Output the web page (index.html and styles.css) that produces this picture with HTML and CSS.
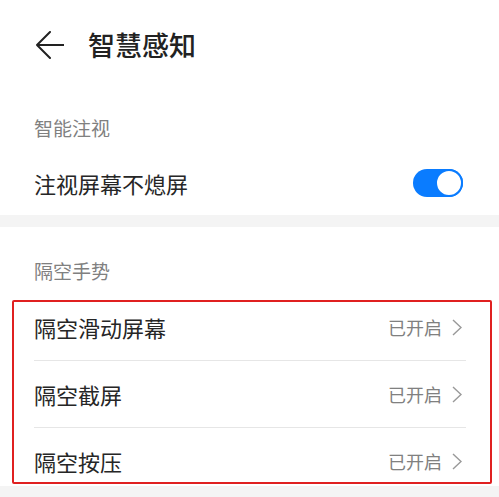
FILE: index.html
```html
<!DOCTYPE html>
<html>

<head>
    <meta charset="utf-8">
    <title>智慧感知</title>
    <link rel="stylesheet" href="styles.css">
</head>

<body>
    <div class="header">
        <svg class="back" width="28" height="28" viewBox="0 0 28 28">
            <path d="M14 1 L1 14 L14 27 M1 14 L28 14" fill="none" stroke="#222" stroke-width="2" stroke-linecap="round" stroke-linejoin="round"/>
        </svg>
        <h1>智慧感知</h1>
    </div>

    <div class="card first">
        <div class="sub-title">智能注视</div>
        <div class="row switch-row">
            <span class="row-label">注视屏幕不熄屏</span>
            <span class="toggle"><span class="knob"></span></span>
        </div>
    </div>

    <div class="card second">
        <div class="sub-title">隔空手势</div>
        <div class="list">
            <div class="row item">
                <span class="row-label">隔空滑动屏幕</span>
                <span class="row-value">已开启<svg class="chevron" width="10" height="17" viewBox="0 0 10 17"><path d="M1 1 L9 8.5 L1 16" fill="none" stroke="#999" stroke-width="1.4"/></svg></span>
            </div>
            <div class="row item">
                <span class="row-label">隔空截屏</span>
                <span class="row-value">已开启<svg class="chevron" width="10" height="17" viewBox="0 0 10 17"><path d="M1 1 L9 8.5 L1 16" fill="none" stroke="#999" stroke-width="1.4"/></svg></span>
            </div>
            <div class="row item last">
                <span class="row-label">隔空按压</span>
                <span class="row-value">已开启<svg class="chevron" width="10" height="17" viewBox="0 0 10 17"><path d="M1 1 L9 8.5 L1 16" fill="none" stroke="#999" stroke-width="1.4"/></svg></span>
            </div>
            <div class="highlight"></div>
        </div>
    </div>
</body>

</html>
```

FILE: styles.css
```css
body {
    margin: 0;
    background: #f4f4f4;
    font-family: "Noto Sans CJK SC", "Noto Sans", sans-serif;
    color: #262626;
    width: 499px;
    height: 497px;
    overflow: hidden;
}

.header {
    display: flex;
    align-items: center;
    height: 90px;
    padding-left: 36px;
    background: #fff;
}

.back {
    display: block;
}

.header h1 {
    margin: 0 0 0 24px;
    font-size: 27px;
    font-weight: 500;
    color: #222;
    line-height: 30px;
}

.card {
    background: #fff;
}

.card.first {
    padding-bottom: 3px;
    margin-bottom: 12px;
}

.sub-title {
    padding: 26px 34px 14px;
    font-size: 19px;
    line-height: 24px;
    color: #808080;
}

.card.second .sub-title {
    padding-top: 32px;
    padding-bottom: 11px;
}

.row {
    display: flex;
    align-items: center;
    justify-content: space-between;
    margin: 0 36px 0 34px;
}

.switch-row {
    height: 58px;
}

.row-label {
    font-size: 22px;
    line-height: 25px;
}

.toggle {
    position: relative;
    width: 50px;
    height: 28px;
    border-radius: 14px;
    background: #0a7cff;
}

.toggle .knob {
    position: absolute;
    right: 0;
    top: 0;
    width: 24px;
    height: 24px;
    border-radius: 50%;
    background: #fff;
    border: 2px solid #0a7cff;
}

.list {
    position: relative;
}

.item {
    margin-right: 33px;
    padding: 21px 0 20px;
    align-items: flex-start;
    border-bottom: 1px solid #e6e6e6;
}

.item.last {
    border-bottom: none;
    padding-bottom: 12px;
}

.row-value {
    display: flex;
    align-items: center;
    font-size: 18px;
    line-height: 25px;
    color: #808080;
    padding-right: 4px;
}

.chevron {
    margin-left: 10px;
}

.highlight {
    position: absolute;
    left: 12px;
    right: 7px;
    top: 6px;
    height: 180px;
    border: 2px solid #e02020;
    border-radius: 2px;
    pointer-events: none;
}
```
